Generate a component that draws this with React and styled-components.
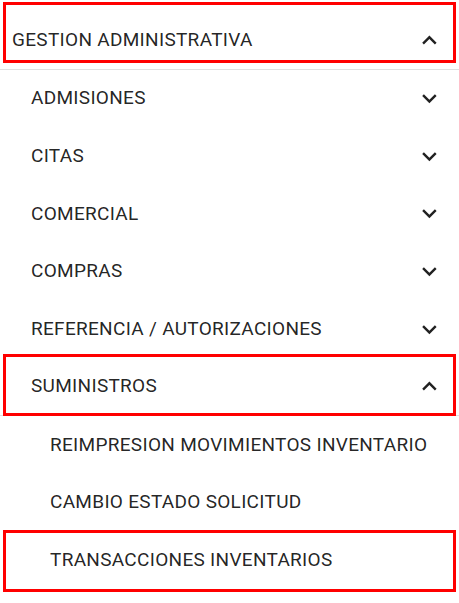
import React from "react";
import styled, { createGlobalStyle } from "styled-components";

const GlobalStyle = createGlobalStyle`
  html, body {
    margin: 0;
    padding: 0;
    background: #ffffff;
  }
  body {
    font-family: Roboto, "Liberation Sans", sans-serif;
  }
`;

const menu = [
  {
    label: "GESTION ADMINISTRATIVA",
    open: true,
    mark: { top: -9, bottom: 6 },
    children: [
      { label: "ADMISIONES", children: [] },
      { label: "CITAS", children: [] },
      { label: "COMERCIAL", children: [] },
      { label: "COMPRAS", children: [] },
      { label: "REFERENCIA / AUTORIZACIONES", children: [] },
      {
        label: "SUMINISTROS",
        open: true,
        mark: { top: -4, bottom: -1 },
        children: [
          { label: "REIMPRESION MOVIMIENTOS INVENTARIO" },
          { label: "CAMBIO ESTADO SOLICITUD" },
          { label: "TRANSACCIONES INVENTARIOS", mark: { top: -2, bottom: -3 } },
        ],
      },
    ],
  },
];

const Chevron = ({ up }) => (
  <Icon viewBox="0 0 24 24" aria-hidden="true">
    {up ? (
      <path d="M12 8l-6 6 1.41 1.41L12 10.83l4.59 4.58L18 14z" />
    ) : (
      <path d="M16.59 8.59L12 13.17 7.41 8.59 6 10l6 6 6-6z" />
    )}
  </Icon>
);

const MenuNode = ({ item, level }) => {
  const hasChildren = Array.isArray(item.children);
  return (
    <>
      <Row $level={level} $divider={item.open}>
        <Label>{item.label}</Label>
        {hasChildren && <Chevron up={item.open} />}
        {item.mark && <Mark $top={item.mark.top} $bottom={item.mark.bottom} />}
      </Row>
      {item.open &&
        item.children.map((child) => (
          <MenuNode key={child.label} item={child} level={level + 1} />
        ))}
    </>
  );
};

const App = () => {
  return (
    <>
      <GlobalStyle />
      <Nav>
        {menu.map((item) => (
          <MenuNode key={item.label} item={item} level={0} />
        ))}
      </Nav>
    </>
  );
};

export default App;

const Nav = styled.nav`
  width: 459px;
  padding: 11.2px 0 13px;
  display: flex;
  flex-direction: column;
`;

const Row = styled.div`
  position: relative;
  height: 57.6px;
  box-sizing: content-box;
  display: flex;
  align-items: center;
  justify-content: space-between;
  padding: 0 15px 0 ${(p) => 12 + p.$level * 19}px;
  border-bottom: ${(p) => (p.$divider ? "1px solid #e0e0e0" : "none")};
  color: rgba(0, 0, 0, 0.87);
`;

const Label = styled.span`
  font-size: 19px;
  font-weight: 400;
  line-height: 1.5;
  letter-spacing: 0.3px;
  white-space: nowrap;
`;

const Icon = styled.svg`
  width: 28.8px;
  height: 28.8px;
  flex-shrink: 0;
  fill: rgba(0, 0, 0, 0.87);
`;

const Mark = styled.div`
  position: absolute;
  left: 3px;
  right: 3px;
  top: ${(p) => p.$top}px;
  bottom: ${(p) => p.$bottom}px;
  border: 3px solid #ff0000;
  pointer-events: none;
`;
